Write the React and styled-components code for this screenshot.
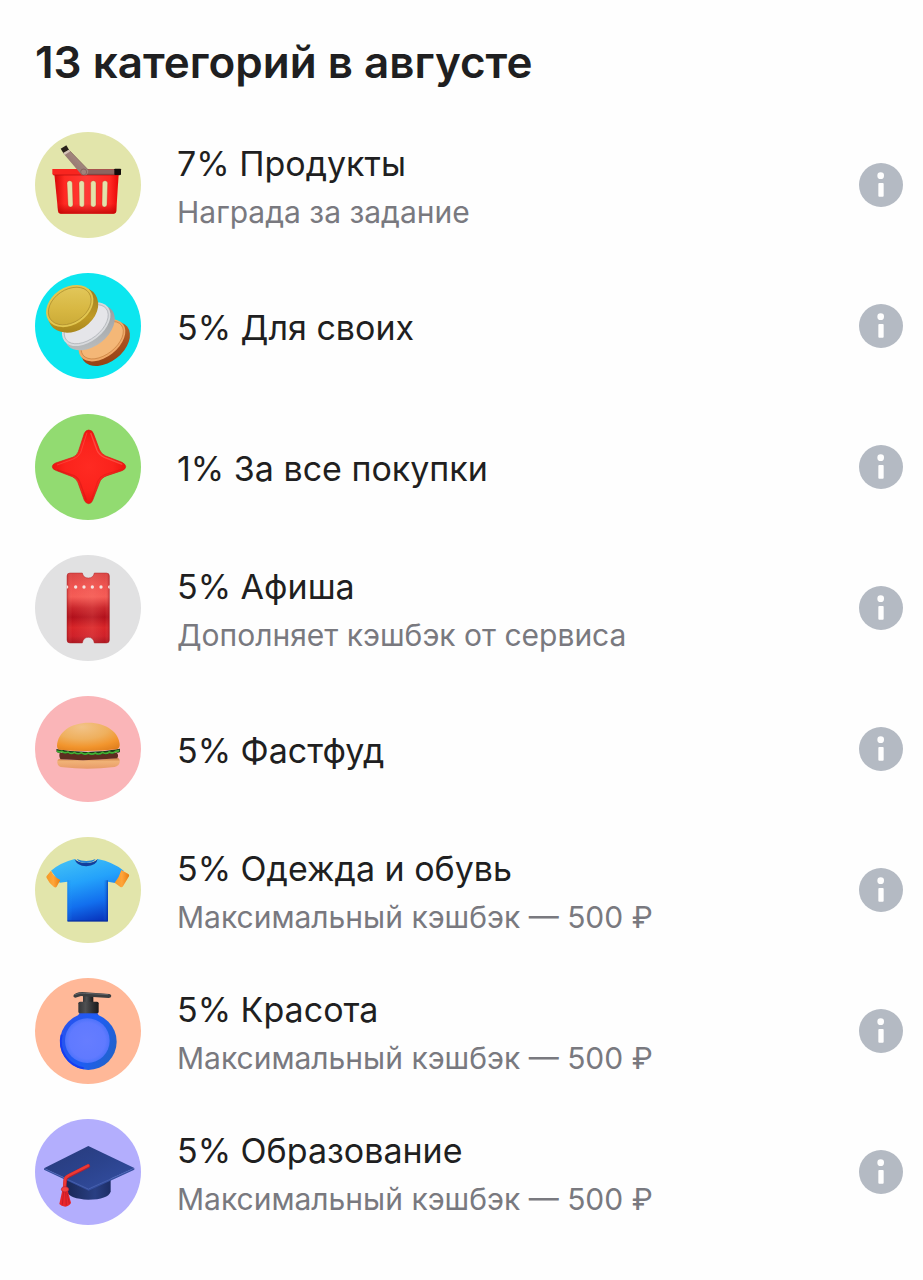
import React from "react";
import styled, { createGlobalStyle } from "styled-components";

const GlobalStyle = createGlobalStyle`
  *, *::before, *::after { box-sizing: border-box; }
  body {
    margin: 0;
    background: #fefefe;
    color: #1f1f21;
    font-family: Inter, "Noto Sans", "Liberation Sans", sans-serif;
  }
`;

const Page = styled.main`
  padding: 36px 20px 56px 35px;
`;

const Title = styled.h1`
  margin: 0 0 44px;
  font-size: 44px;
  line-height: 52px;
  font-weight: 600;
`;

const List = styled.ul`
  display: flex;
  flex-direction: column;
  gap: 35px;
  margin: 0;
  padding: 0;
  list-style: none;
`;

const Row = styled.li`
  display: flex;
  align-items: center;
  gap: 36px;
`;

const Avatar = styled.div`
  flex: none;
  width: 106px;
  height: 106px;
  border-radius: 50%;
  overflow: hidden;
  background: ${({ $color }) => $color};

  svg {
    display: block;
    width: 100%;
    height: 100%;
  }
`;

const Texts = styled.div`
  flex: 1;
  min-width: 0;
  padding-top: 4px;
`;

const Name = styled.p`
  margin: 0;
  font-size: 34px;
  line-height: 50px;
`;

const Note = styled.p`
  margin: 0;
  font-size: 30px;
  line-height: 46px;
  color: #79797f;
`;

const InfoButton = styled.button`
  flex: none;
  width: 44px;
  height: 44px;
  padding: 0;
  border: 0;
  border-radius: 50%;
  background: #b4bac3;
  cursor: pointer;

  svg {
    display: block;
    width: 100%;
    height: 100%;
  }
`;

const Art = ({ children }) => (
  <svg viewBox="30 30 318 318" aria-hidden="true">
    {children}
  </svg>
);

const BasketArt = () => (
  <Art>
    <defs>
      <linearGradient id="basketBody" x1="0" x2="1" y1="0" y2="0">
        <stop offset="0" stopColor="#d60808" />
        <stop offset="0.16" stopColor="#ff2a22" />
        <stop offset="0.5" stopColor="#ff3a36" />
        <stop offset="0.86" stopColor="#ff2a24" />
        <stop offset="1" stopColor="#e80606" />
      </linearGradient>
      <linearGradient id="basketShade" x1="0" x2="0" y1="0" y2="1">
        <stop offset="0.75" stopColor="#c00000" stopOpacity="0" />
        <stop offset="1" stopColor="#b80000" stopOpacity="0.75" />
      </linearGradient>
      <linearGradient id="basketHandle" x1="0" x2="1" y1="1" y2="0">
        <stop offset="0" stopColor="#87665f" />
        <stop offset="1" stopColor="#b39a92" />
      </linearGradient>
    </defs>
    <path d="M88 156H281L274 267Q273 275 265 275H107Q100 275 99 267Z" fill="url(#basketBody)" />
    <path d="M88 156H281L274 267Q273 275 265 275H107Q100 275 99 267Z" fill="url(#basketShade)" />
    <path d="M82 141H284V159H85Q82 159 82 154Z" fill="#f9251f" />
    <path d="M85 159H284" stroke="#b10c0c" strokeWidth="2" />
    <path d="M182 142H270V158H182Z" fill="#8d6560" />
    <path d="M182 157H270" stroke="#6b3a36" strokeWidth="2" />
    <rect x="268" y="140" width="20" height="19" rx="2" fill="#120c0b" />
    <path d="M114 93L131 83L189 143Q192 153 184 159Q172 162 165 153Z" fill="url(#basketHandle)" />
    <path d="M131 83L189 143" stroke="#775750" strokeWidth="2" fill="none" />
    <path d="M107 80L124 70L132 83L115 93Z" fill="#29211a" />
    <path d="M115 93L132 83L136 88L119 99Z" fill="#d5c5b8" />
    <circle cx="176" cy="150" r="9" fill="#a0827b" stroke="#7a5953" strokeWidth="2" />
    <g fill="#e2e3aa" stroke="#c42a1c" strokeWidth="1">
      <path d="M126 184Q126 176 134 176Q142 176 142 184L144 247Q144 255 137 255Q129 255 129 247Z" />
      <path d="M162 184Q162 176 170 176Q178 176 178 184V247Q178 255 171 255Q163 255 163 247Z" />
      <path d="M197 184Q197 176 205 176Q213 176 213 184V247Q213 255 205 255Q197 255 197 247Z" />
      <path d="M232 184Q232 176 240 176Q248 176 248 184L246 247Q246 255 238 255Q231 255 231 247Z" />
    </g>
  </Art>
);

const CoinsArt = () => (
  <Art>
    <defs>
      <linearGradient id="goldFace" x1="0" x2="1" y1="1" y2="0">
        <stop offset="0" stopColor="#c6a532" />
        <stop offset="0.45" stopColor="#d8b843" />
        <stop offset="1" stopColor="#e5cc62" />
      </linearGradient>
      <linearGradient id="goldEdge" x1="0" x2="1" y1="1" y2="0">
        <stop offset="0" stopColor="#9c7b18" />
        <stop offset="0.4" stopColor="#c09a25" />
        <stop offset="1" stopColor="#8d7020" />
      </linearGradient>
      <linearGradient id="silverEdge" x1="0" x2="1" y1="1" y2="0">
        <stop offset="0" stopColor="#bfc2c3" />
        <stop offset="0.5" stopColor="#a9acae" />
        <stop offset="1" stopColor="#8d9496" />
      </linearGradient>
      <linearGradient id="bronzeEdge" x1="0" x2="1" y1="1" y2="0">
        <stop offset="0" stopColor="#8c3d12" />
        <stop offset="0.5" stopColor="#a8511d" />
        <stop offset="1" stopColor="#bd7134" />
      </linearGradient>
    </defs>
    <g transform="rotate(-38 239 236)">
      <ellipse cx="237" cy="242" rx="83" ry="55" fill="url(#bronzeEdge)" />
      <ellipse cx="235" cy="228" rx="80" ry="50" fill="#efa968" />
      <ellipse cx="236" cy="228" rx="73" ry="43" fill="#f4b777" stroke="#c7803f" strokeWidth="2" />
    </g>
    <g transform="rotate(-38 191 188)">
      <ellipse cx="190" cy="195" rx="85" ry="55" fill="url(#silverEdge)" />
      <ellipse cx="188" cy="180" rx="83" ry="52" fill="#d8dadd" />
      <ellipse cx="188" cy="180" rx="76" ry="45" fill="#e5e5e9" stroke="#a9adb2" strokeWidth="2" />
    </g>
    <g transform="rotate(-34 140 136)">
      <ellipse cx="141" cy="142" rx="81" ry="62" fill="url(#goldEdge)" />
      <ellipse cx="139" cy="127" rx="77" ry="56" fill="#e2c650" />
      <ellipse cx="139" cy="127" rx="70" ry="49" fill="url(#goldFace)" stroke="#a9892b" strokeWidth="2" />
    </g>
  </Art>
);

const starPath =
  "M178 88Q183 78 191 78Q201 78 205 88L223 136Q228 150 242 156L291 175Q302 181 302 188Q302 195 291 200L246 215Q228 221 223 237L203 289Q199 299 191 299Q183 299 178 289L159 236Q155 224 142 218L92 199Q82 195 82 188Q82 181 92 177L143 160Q155 156 160 143Z";

const StarArt = () => (
  <Art>
    <defs>
      <radialGradient id="starFill" cx="0.5" cy="0.5" r="0.5">
        <stop offset="0" stopColor="#ff2a22" />
        <stop offset="0.65" stopColor="#fb231c" />
        <stop offset="1" stopColor="#ee150f" />
      </radialGradient>
    </defs>
    <path d={starPath} fill="url(#starFill)" stroke="#d31d17" strokeWidth="2" />
    <path d="M197 87L216 139Q222 153 238 160L292 181" stroke="#ff7065" strokeWidth="4" fill="none" opacity="0.5" />
    <path d="M186 86L167 146Q160 160 143 166L96 183" stroke="#ff6258" strokeWidth="3" fill="none" opacity="0.45" />
    <path d="M96 198L147 215Q161 222 166 238L184 289" stroke="#c51512" strokeWidth="4" fill="none" opacity="0.4" />
    <path d="M200 286L218 232Q224 218 239 212L290 196" stroke="#d21814" strokeWidth="3" fill="none" opacity="0.4" />
  </Art>
);

const ticketPath =
  "M135 84H172Q175 99 190 99Q205 99 208 84H244Q253 84 253 93V285Q253 294 244 294H208Q205 277 190 277Q175 277 172 294H135Q126 294 126 285V93Q126 84 135 84Z";

const TicketArt = () => (
  <Art>
    <defs>
      <linearGradient id="ticketFill" x1="0" x2="0" y1="0" y2="1">
        <stop offset="0" stopColor="#da4645" />
        <stop offset="0.2" stopColor="#f05450" />
        <stop offset="0.34" stopColor="#f55c56" />
        <stop offset="0.5" stopColor="#c8252b" />
        <stop offset="0.63" stopColor="#b10f1b" />
        <stop offset="0.78" stopColor="#d82428" />
        <stop offset="0.9" stopColor="#cf2029" />
        <stop offset="1" stopColor="#aa1620" />
      </linearGradient>
      <linearGradient id="ticketGlow" x1="0" x2="1" y1="0" y2="0">
        <stop offset="0" stopColor="#8e0d14" stopOpacity="0.35" />
        <stop offset="0.12" stopColor="#ff8b7e" stopOpacity="0" />
        <stop offset="0.6" stopColor="#ff8b7e" stopOpacity="0.18" />
        <stop offset="0.9" stopColor="#ff8b7e" stopOpacity="0" />
        <stop offset="1" stopColor="#8e0d14" stopOpacity="0.4" />
      </linearGradient>
    </defs>
    <path d={ticketPath} fill="url(#ticketFill)" />
    <path d={ticketPath} fill="url(#ticketGlow)" stroke="#ac2329" strokeOpacity="0.7" strokeWidth="2" />
    <g fill="#f5e3e0">
      <path d="M125 121A5 5 0 0 1 125 131Z" />
      <circle cx="152" cy="126" r="5" />
      <circle cx="177" cy="126" r="5" />
      <circle cx="202" cy="126" r="5" />
      <circle cx="228" cy="126" r="5" />
      <path d="M254 121A5 5 0 0 0 254 131Z" />
    </g>
  </Art>
);

const BurgerArt = () => (
  <Art>
    <defs>
      <radialGradient id="bunTop" cx="0.4" cy="0.15" r="0.95">
        <stop offset="0" stopColor="#f2c388" />
        <stop offset="0.45" stopColor="#efb05e" />
        <stop offset="0.75" stopColor="#f2952d" />
        <stop offset="1" stopColor="#de7d1c" />
      </radialGradient>
      <linearGradient id="bunBottom" x1="0" x2="0" y1="0" y2="1">
        <stop offset="0" stopColor="#c5793d" />
        <stop offset="0.35" stopColor="#f1b276" />
        <stop offset="1" stopColor="#e89b68" />
      </linearGradient>
    </defs>
    <path d="M102 219Q190 228 278 215Q286 218 284 229Q282 240 269 243Q190 253 114 244Q98 242 97 230Q96 221 102 219Z" fill="url(#bunBottom)" />
    <path d="M104 200H275Q283 208 276 217Q190 226 107 220Q101 213 104 200Z" fill="#5d2d20" />
    <path d="M94 189Q190 207 285 188V198Q278 202 272 198Q263 208 253 200Q243 210 233 202Q222 211 211 203Q200 211 189 203Q178 211 168 202Q157 210 147 201Q137 208 128 200Q119 206 111 198Q101 202 95 198Z" fill="#193c18" />
    <path d="M96 195Q103 200 111 196Q120 203 129 198Q138 206 148 199Q159 207 169 200Q179 208 190 201Q201 208 211 201Q222 208 233 199Q243 206 253 198Q263 204 272 196L283 194" stroke="#42b033" strokeWidth="5" fill="none" />
    <path d="M96 180C98 137 139 110 191 110C245 110 282 140 284 174Q285 187 275 190Q190 200 104 191Q96 189 96 180Z" fill="url(#bunTop)" />
  </Art>
);

const ShirtArt = () => (
  <Art>
    <defs>
      <linearGradient id="shirtFill" x1="0.35" x2="0.65" y1="0" y2="1">
        <stop offset="0" stopColor="#3fbdf6" />
        <stop offset="0.35" stopColor="#24a2fb" />
        <stop offset="0.7" stopColor="#126fee" />
        <stop offset="1" stopColor="#0834bd" />
      </linearGradient>
      <linearGradient id="shirtSide" x1="0" x2="1" y1="0" y2="0">
        <stop offset="0" stopColor="#0c62d8" stopOpacity="0.35" />
        <stop offset="0.12" stopColor="#29a5ff" stopOpacity="0" />
        <stop offset="0.88" stopColor="#1d86f7" stopOpacity="0" />
        <stop offset="1" stopColor="#041f91" stopOpacity="0.6" />
      </linearGradient>
      <linearGradient id="cuff" x1="0" x2="1" y1="0" y2="0">
        <stop offset="0" stopColor="#f39a25" />
        <stop offset="0.5" stopColor="#ffa53a" />
        <stop offset="1" stopColor="#e87c10" />
      </linearGradient>
    </defs>
    <path d="M149 96Q106 107 78 131L104 167L127 164V283H249V164L275 169L296 131Q264 105 218 96Q207 113 184 113Q160 113 149 96Z" fill="url(#shirtFill)" />
    <path d="M127 160H249V283H127Z" fill="url(#shirtSide)" />
    <path d="M78 131Q86 149 106 159L95 179Q92 183 87 180Q72 169 65 153Q63 150 65 147Z" fill="url(#cuff)" />
    <path d="M289 129L310 141Q314 144 312 148L294 178Q291 182 286 180L269 167Q283 151 289 129Z" fill="url(#cuff)" />
    <path d="M149 96Q160 108 184 108Q207 108 218 96Q215 116 184 118Q154 117 149 96Z" fill="#123f9d" />
    <path d="M155 96Q184 108 212 96Q207 107 184 108Q162 108 155 96Z" fill="#2685d7" />
    <path d="M128 282H248" stroke="#072a97" strokeWidth="3" />
  </Art>
);

const SoapArt = () => (
  <Art>
    <defs>
      <linearGradient id="bottleRim" x1="0" x2="1" y1="0.3" y2="0.7">
        <stop offset="0" stopColor="#2852ed" />
        <stop offset="0.5" stopColor="#1e5df5" />
        <stop offset="1" stopColor="#2163c9" />
      </linearGradient>
      <radialGradient id="bottleFace" cx="0.5" cy="0.5" r="0.5">
        <stop offset="0" stopColor="#667dff" />
        <stop offset="0.8" stopColor="#607aff" />
        <stop offset="1" stopColor="#4e73fb" />
      </radialGradient>
      <linearGradient id="pump" x1="0" x2="1" y1="0" y2="0">
        <stop offset="0" stopColor="#353638" />
        <stop offset="0.35" stopColor="#4f5052" />
        <stop offset="0.7" stopColor="#303133" />
        <stop offset="1" stopColor="#191a1c" />
      </linearGradient>
    </defs>
    <path d="M165 132H216L222 145H158Z" fill="#2a55df" />
    <circle cx="190" cy="221" r="85" fill="url(#bottleRim)" />
    <path d="M110 200A82 82 0 0 0 176 301" stroke="#173cf0" strokeWidth="6" fill="none" />
    <circle cx="187" cy="218" r="67" fill="url(#bottleFace)" />
    <path d="M174 82H205V107H174Z" fill="url(#pump)" />
    <rect x="160" y="101" width="61" height="35" rx="5" fill="url(#pump)" />
    <path d="M145 85Q144 80 153 76Q166 70 182 73L253 78Q259 79 259 84Q258 90 251 90L205 87L168 84L151 89Q147 89 145 85Z" fill="#3c3e40" />
    <path d="M150 80Q164 73 182 76L250 80" stroke="#626468" strokeWidth="3" fill="none" />
  </Art>
);

const CapArt = () => (
  <Art>
    <defs>
      <linearGradient id="capTop" x1="0" x2="1" y1="0" y2="1">
        <stop offset="0" stopColor="#283a79" />
        <stop offset="0.5" stopColor="#2b438d" />
        <stop offset="1" stopColor="#344fa3" />
      </linearGradient>
      <linearGradient id="capBase" x1="0" x2="1" y1="0" y2="0">
        <stop offset="0" stopColor="#192857" />
        <stop offset="0.65" stopColor="#293f83" />
        <stop offset="1" stopColor="#1c2d65" />
      </linearGradient>
    </defs>
    <path d="M123 202H257V248Q249 271 190 272Q134 270 123 246Z" fill="url(#capBase)" />
    <path d="M57 178L190 239L328 177V182L191 245L57 182Z" fill="#344e9e" />
    <path d="M190 111L328 177L190 239L57 178Z" fill="url(#capTop)" />
    <path d="M61 180L190 240L321 181" stroke="#526bba" strokeWidth="2" fill="none" />
    <path d="M190 171L131 201Q122 205 121 213L119 236" fill="none" stroke="#b32032" strokeWidth="11" strokeLinecap="round" />
    <path d="M189 170L130 200Q121 204 120 212L118 236" fill="none" stroke="#ed3934" strokeWidth="8" strokeLinecap="round" />
    <path d="M112 244L128 244L138 282Q132 292 121 293Q108 292 103 285Z" fill="#e9252b" />
    <path d="M116 248L112 287M122 249L124 289M126 251L133 284" stroke="#b81926" strokeWidth="2" />
    <ellipse cx="120" cy="241" rx="11" ry="8" fill="#f44340" stroke="#b82133" strokeWidth="2" />
  </Art>
);

const categories = [
  { name: "7% Продукты", note: "Награда за задание", color: "#e2e5ab", art: BasketArt },
  { name: "5% Для своих", color: "#0ce6ef", art: CoinsArt },
  { name: "1% За все покупки", color: "#92db71", art: StarArt },
  { name: "5% Афиша", note: "Дополняет кэшбэк от сервиса", color: "#e1e1e2", art: TicketArt },
  { name: "5% Фастфуд", color: "#fab5b8", art: BurgerArt },
  { name: "5% Одежда и обувь", note: "Максимальный кэшбэк — 500 ₽", color: "#e2e5ab", art: ShirtArt },
  { name: "5% Красота", note: "Максимальный кэшбэк — 500 ₽", color: "#ffb898", art: SoapArt },
  { name: "5% Образование", note: "Максимальный кэшбэк — 500 ₽", color: "#b3aefd", art: CapArt },
];

export default function App() {
  return (
    <>
      <GlobalStyle />
      <Page>
        <Title>13 категорий в августе</Title>
        <List>
          {categories.map(({ name, note, color, art: Picture }) => (
            <Row key={name}>
              <Avatar $color={color}>
                <Picture />
              </Avatar>
              <Texts>
                <Name>{name}</Name>
                {note && <Note>{note}</Note>}
              </Texts>
              <InfoButton type="button" aria-label={`Подробнее: ${name}`}>
                <svg viewBox="0 0 132 132" aria-hidden="true">
                  <circle cx="65" cy="38" r="10" fill="#fefefe" />
                  <rect x="58" y="60" width="16" height="41" rx="3" fill="#fefefe" />
                </svg>
              </InfoButton>
            </Row>
          ))}
        </List>
      </Page>
    </>
  );
}
